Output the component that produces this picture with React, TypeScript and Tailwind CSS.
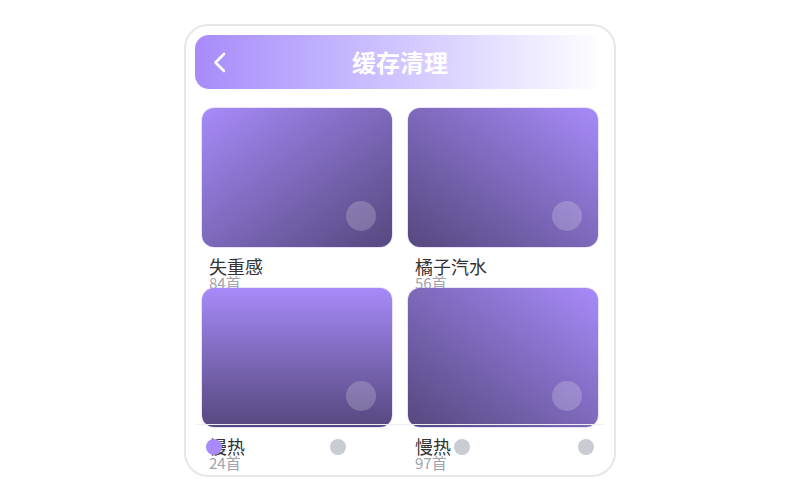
import React from "react";

const items = [
  { title: "失重感", count: "84首", grad: "br" },
  { title: "橘子汽水", count: "56首", grad: "bl" },
  { title: "慢热", count: "24首", grad: "b" },
  { title: "慢热", count: "97首", grad: "bl" },
];

function Card({ title, count, grad }: { title: string; count: string; grad: string }) {
  const gradClass =
    grad === "br" ? "bg-linear-to-br" : grad === "bl" ? "bg-linear-to-bl" : "bg-linear-to-b";
  return (
    <div className="h-[180px] flex flex-col">
      <div
        className={`relative h-[139px] shrink-0 rounded-[12px] ${gradClass} from-[#a78bfa] to-[#56487f] shadow-[0_0_0_0.5px_rgba(167,139,250,0.5)]`}
      >
        <div className="absolute right-[16px] bottom-[16px] w-[30px] h-[30px] rounded-full bg-white/20" />
      </div>
      <div className="mt-[10px] px-[7px]">
        <div className="text-[18px] leading-[18px] text-[#333]">{title}</div>
        <div className="text-[15px] leading-[15px] text-[#a0a4ab]">{count}</div>
      </div>
    </div>
  );
}

export default function App() {
  return (
    <div
      className="w-[800px] h-[500px] bg-white flex justify-center pt-[24px]"
      style={{ fontFamily: '"Noto Sans CJK SC", "Noto Sans", sans-serif' }}
    >
      <div className="relative w-[432px] h-[453px] border-2 border-[#e7e7eb] rounded-[24px] overflow-hidden p-[9px]">
        <div className="h-[54px] rounded-[14px] bg-linear-to-r from-[#a78bfa] to-white grid grid-cols-[1fr_auto_1fr] items-center">
          <div className="pl-[18px] flex items-center">
            <svg width="13" height="21" viewBox="0 0 13 21" fill="none">
              <path d="M11 2 L2.5 10.5 L11 19" stroke="white" strokeWidth="2.6" strokeLinecap="round" strokeLinejoin="round" />
            </svg>
          </div>
          <div className="text-[24px] font-bold text-white leading-none">缓存清理</div>
          <div />
        </div>
        <div className="mt-[19px] px-[7px] grid grid-cols-2 gap-x-4">
          {items.map((it, i) => (
            <Card key={i} {...it} />
          ))}
        </div>
        <div className="absolute left-[10px] right-[10px] bottom-[7px] h-[44px] border-t border-[#eceef1] flex items-center justify-between px-[10px]">
          <div className="w-4 h-4 rounded-full bg-[#a78bfa]" />
          <div className="w-4 h-4 rounded-full bg-[#c9cdd3]" />
          <div className="w-4 h-4 rounded-full bg-[#c9cdd3]" />
          <div className="w-4 h-4 rounded-full bg-[#c9cdd3]" />
        </div>
      </div>
    </div>
  );
}
